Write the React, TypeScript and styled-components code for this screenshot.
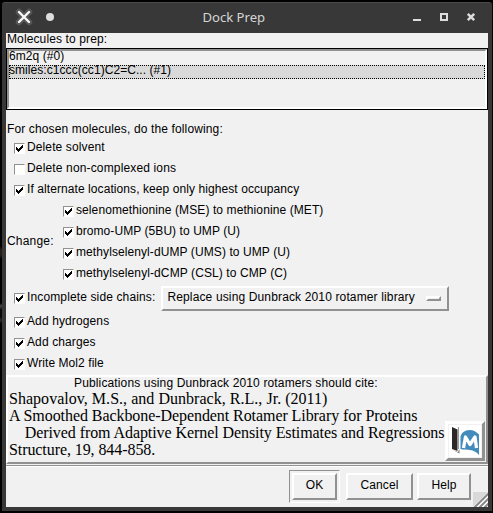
import React from "react";
import styled, { createGlobalStyle, css } from "styled-components";

const GlobalStyle = createGlobalStyle`
  html, body { margin: 0; padding: 0; background: #000; overflow: hidden; }
  * { box-sizing: border-box; }
`;

const FACE = "#f1f1f1";
const SHADE = "#919191";

const raised = (width: number) => css`
  border: ${width}px solid;
  border-color: #fff ${SHADE} ${SHADE} #fff;
`;

const Desktop = styled.div`
  width: 493px;
  height: 513px;
  padding: 2px 1px 2px 2px;
  background: linear-gradient(#000 0 246px, #241f1a 250px 255px, #000 259px 303px, #4a4643 306px, #080808 310px 317px, #2e2822 320px, #000 324px) 0 0 / 2px 100% no-repeat #000;
`;

const Window = styled.div`
  height: 509px;
  display: flex;
  flex-direction: column;
  padding: 0 4px 4px;
  background: #383838;
  border-top: 1px solid #4b4b4b;
  border-radius: 3px 3px 0 0;
`;

const TitleBar = styled.header`
  flex: 0 0 30px;
  display: grid;
  grid-template-columns: 60px 1fr 70px;
  align-items: center;
  padding: 0 5px 2px 8.5px;
`;

const TitleGroup = styled.div<{ $gap: number }>`
  display: flex;
  align-items: center;
  gap: ${(p) => p.$gap}px;
`;

const Title = styled.h1`
  margin: 0;
  font: 400 13.1px/28px "Noto Sans", sans-serif;
  color: #d5d5d5;
  text-align: center;
  white-space: nowrap;
  padding-right: 20px;
`;

const Body = styled.main`
  height: 474px;
  display: flex;
  flex-direction: column;
  background: ${FACE};
  color: #000;
  font: 12px/15px "Liberation Sans", Arial, sans-serif;
`;

const Label = styled.span<{ $spacing?: number }>`
  display: block;
  white-space: pre;
  letter-spacing: ${(p) => p.$spacing ?? 0.12}px;
`;

const ListCaption = styled.div`
  height: 15px;
  padding-left: 1px;
  line-height: 13px;
`;

const ListFrame = styled.div`
  height: 62px;
  border: 1px solid #000;
`;

const List = styled.ul`
  height: 60px;
  margin: 0;
  padding: 0;
  list-style: none;
  border: 2px solid;
  border-color: ${SHADE} #fff #fff ${SHADE};
`;

const ListItem = styled.li<{ $selected?: boolean }>`
  height: 14px;
  line-height: ${(p) => (p.$selected ? 8 : 9)}px;
  border: 1px ${(p) => (p.$selected ? "dotted #000" : "solid transparent")};
  border-left-width: ${(p) => (p.$selected ? 1 : 0)}px;
  background: ${(p) => (p.$selected ? "#d9d9d9" : "transparent")};

  ${Label} {
    margin-left: ${(p) => (p.$selected ? -1 : 0)}px;
  }
`;

const Options = styled.section`
  height: 265px;
  padding: 12px 0 0 1px;
`;

const Intro = styled.div`
  height: 16px;
`;

const Row = styled.label<{ $height?: number }>`
  height: ${(p) => p.$height ?? 21}px;
  display: flex;
  align-items: center;
  gap: 2px;
  padding-left: 7px;

  ${Label} {
    padding-bottom: 2px;
  }
`;

const Box = styled.span`
  width: 11px;
  height: 11px;
  flex: none;
  background: #fff;
  border: 1px solid;
  border-color: ${SHADE} #fff #fff ${SHADE};

  svg {
    display: block;
  }
`;

const ChangeGroup = styled.div`
  display: grid;
  grid-template-columns: 49px 1fr;
  align-items: center;

  > ${Label} {
    padding-bottom: 4px;
  }
`;

const Menu = styled.span`
  width: 288px;
  height: 25px;
  margin-left: 4px;
  display: flex;
  align-items: center;
  justify-content: space-between;
  padding: 0 6px 0 4px;
  ${raised(2)}
`;

const MenuMark = styled.i`
  width: 15px;
  height: 5px;
  ${raised(2)}
`;

const Citation = styled.section`
  height: 89px;
  display: grid;
  grid-template-columns: 1fr 40px;
  align-items: end;
  padding: 0 1px 1px;
  ${raised(2)}
`;

const CitationText = styled.div`
  height: 84px;
  width: 436px;
`;

const CitationCaption = styled.div`
  height: 13px;
  padding-left: 65px;
  line-height: 13px;
`;

const Reference = styled.p`
  margin: 0;
  font: 16px/17px "Liberation Serif", "Times New Roman", serif;
`;

const LogoButton = styled.button`
  width: 40px;
  height: 40px;
  padding: 1px;
  background: ${FACE};
  ${raised(3)}

  svg {
    display: block;
  }
`;

const Footer = styled.footer`
  height: 42px;
  margin-top: 1px;
  display: flex;
  align-items: flex-start;
  justify-content: flex-end;
  border-top: 1px solid ${SHADE};
  box-shadow: inset 0 1px #fff;
`;

const DefaultRing = styled.div`
  width: 51px;
  height: 33px;
  margin: 4px 6px 0 0;
  padding: 2px;
  border: 1px solid;
  border-color: ${SHADE} #fff #fff ${SHADE};
`;

const Button = styled.button<{ $width: number }>`
  width: ${(p) => p.$width}px;
  height: 27px;
  padding: 0 0 3px;
  display: flex;
  align-items: center;
  justify-content: center;
  background: ${FACE};
  color: #000;
  font: inherit;
  letter-spacing: 0.1px;
  ${raised(2)}

  ${Footer} > & {
    margin: 7px 4px 0 0;
  }
`;

const Grip = styled.div`
  width: 15px;
  height: 15px;
  margin: 26px 0 0 -2px;
  background: #d9d9d9;

  svg {
    display: block;
  }
`;

const Tick = () => (
  <svg width="9" height="9" viewBox="0 0 9 9" shapeRendering="crispEdges">
    <path d="M8 1v3h-1v1h-1v1h-1v1h-1v1h-1v-1h-1v-1h-1v-3h1v1h1v1h1v-1h1v-1h1v-1h1v-1z" fill="#000" />
  </svg>
);

type CheckProps = {
  label: string;
  checked?: boolean;
  height?: number;
  spacing?: number;
  children?: React.ReactNode;
};

const Check = ({ label, checked = true, height, spacing, children }: CheckProps) => (
  <Row $height={height}>
    <Box role="checkbox" aria-checked={checked}>{checked && <Tick />}</Box>
    <Label $spacing={spacing}>{label}</Label>
    {children}
  </Row>
);

const AppMark = () => (
  <svg width="18" height="18" viewBox="0 0 18 18" fill="none" strokeLinecap="round">
    <path d="M4 4l10 10M14 4L4 14" stroke="#555" strokeWidth="6.5" />
    <path d="M4 4l10 10M14 4L4 14" stroke="#f8f8f8" strokeWidth="2.4" />
  </svg>
);

const WindowControls = () => (
  <svg width="63" height="10" viewBox="0 0 63 10">
    <path d="M0 7h8v2H0z" fill="#ddd" shapeRendering="crispEdges" />
    <path d="M28 2h6v6h-6z" fill="none" stroke="#ddd" strokeWidth="2" shapeRendering="crispEdges" />
    <path d="M54.8 1.8l6.4 6.4M61.2 1.8l-6.4 6.4" stroke="#ddd" strokeWidth="2.5" />
  </svg>
);

const MendeleyMark = () => (
  <svg width="32" height="32" viewBox="0 0 32 32">
    <path d="M0 0h32v32H0z" fill="#fff" />
    <path d="M3 2l5.500 2.500v21.500l-5.500-2z" fill="#2c2728" />
    <path d="M4 25l5 2 1.500-3v4.500z" fill="#777" />
    <path d="M9.500 2v22" stroke="#999" strokeWidth="1" />
    <path d="M11.500 12c.5-4 4.500-7 9-7 4 0 7 2 9.500 4.500v20.500c-3-3.500-5.500-4.500-9-5-3-.5-6 .2-9.500-1z" fill="#438bbd" />
    <path d="M14.500 23l2-11 4.500 7.500 5-7.500 1.500 11" fill="none" stroke="#fff" strokeWidth="3.300" strokeLinejoin="round" />
  </svg>
);

const residues = [
  { label: "selenomethionine (MSE) to methionine (MET)", spacing: 0.095 },
  { label: "bromo-UMP (5BU) to UMP (U)", spacing: 0.07 },
  { label: "methylselenyl-dUMP (UMS) to UMP (U)", spacing: 0.09 },
  { label: "methylselenyl-dCMP (CSL) to CMP (C)", spacing: 0.1 },
];

export default function App() {
  return (
    <>
      <GlobalStyle />
      <Desktop>
        <Window>
          <TitleBar>
            <TitleGroup $gap={13}>
              <AppMark />
              <svg width="8" height="8" viewBox="0 0 8 8"><circle cx="4" cy="4" r="4" fill="#ddd" /></svg>
            </TitleGroup>
            <Title>Dock Prep</Title>
            <WindowControls />
          </TitleBar>
          <Body>
            <ListCaption><Label>Molecules to prep:</Label></ListCaption>
            <ListFrame>
              <List>
                <ListItem><Label $spacing={0.08}>6m2q (#0)</Label></ListItem>
                <ListItem $selected><Label $spacing={0.06}>smiles:c1ccc(cc1)C2=C... (#1)</Label></ListItem>
              </List>
            </ListFrame>
            <Options>
              <Intro><Label $spacing={0.13}>For chosen molecules, do the following:</Label></Intro>
              <Check label="Delete solvent" />
              <Check label="Delete non-complexed ions" checked={false} spacing={0.15} />
              <Check label="If alternate locations, keep only highest occupancy" spacing={0.08} />
              <ChangeGroup>
                <Label $spacing={0.2}>Change:</Label>
                <div>{residues.map((r) => <Check key={r.label} {...r} />)}</div>
              </ChangeGroup>
              <Check label="Incomplete side chains:" height={27} spacing={0.13}>
                <Menu>
                  <Label $spacing={0.14}>Replace using Dunbrack 2010 rotamer library</Label>
                  <MenuMark />
                </Menu>
              </Check>
              <Check label="Add hydrogens" />
              <Check label="Add charges" />
              <Check label="Write Mol2 file" spacing={0.07} />
            </Options>
            <Citation>
              <CitationText>
                <CitationCaption>
                  <Label $spacing={0.14}>Publications using Dunbrack 2010 rotamers should cite:</Label>
                </CitationCaption>
                <Reference>
                  <Label $spacing={0.03}>Shapovalov, M.S., and Dunbrack, R.L., Jr. (2011)</Label>
                  <Label $spacing={-0.07}>A Smoothed Backbone-Dependent Rotamer Library for Proteins</Label>
                  <Label $spacing={-0.075}>{"    Derived from Adaptive Kernel Density Estimates and Regressions"}</Label>
                  <Label $spacing={-0.08}>Structure, 19, 844-858.</Label>
                </Reference>
              </CitationText>
              <LogoButton aria-label="Mendeley"><MendeleyMark /></LogoButton>
            </Citation>
            <Footer>
              <DefaultRing><Button $width={45}>OK</Button></DefaultRing>
              <Button $width={67}>Cancel</Button>
              <Button $width={54}>Help</Button>
              <Grip>
                <svg width="15" height="15" viewBox="0 0 15 15">
                  <path d="M0 15L15 0v15z" fill="#fff" />
                  <path d="M1.5 15.5l14-14M6.5 15.5l9-9M11.5 15.5l4-4" stroke="#888" strokeWidth="2" />
                </svg>
              </Grip>
            </Footer>
          </Body>
        </Window>
      </Desktop>
    </>
  );
}
